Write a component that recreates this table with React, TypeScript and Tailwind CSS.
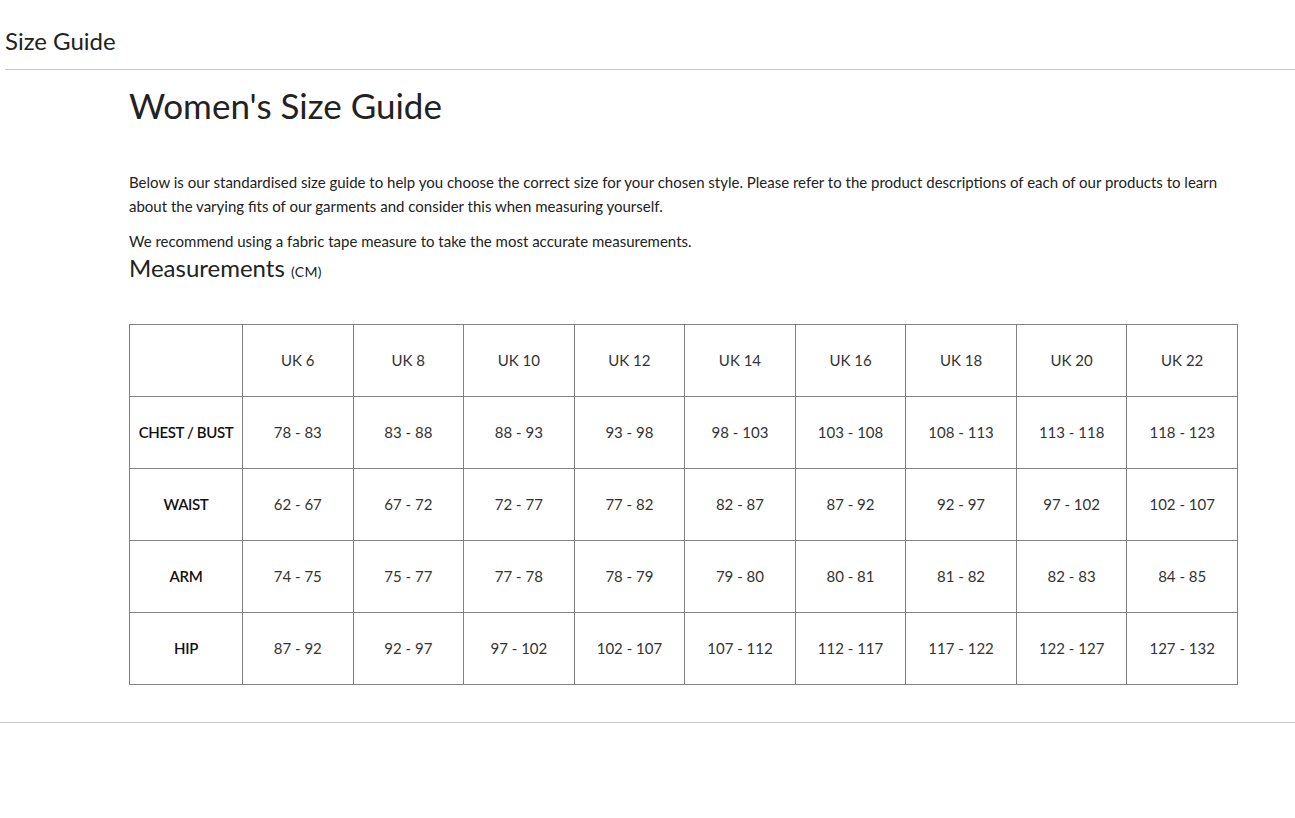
const sizes = ['UK 6', 'UK 8', 'UK 10', 'UK 12', 'UK 14', 'UK 16', 'UK 18', 'UK 20', 'UK 22']

const rows: { label: string; values: string[] }[] = [
  { label: 'CHEST / BUST', values: ['78 - 83', '83 - 88', '88 - 93', '93 - 98', '98 - 103', '103 - 108', '108 - 113', '113 - 118', '118 - 123'] },
  { label: 'WAIST', values: ['62 - 67', '67 - 72', '72 - 77', '77 - 82', '82 - 87', '87 - 92', '92 - 97', '97 - 102', '102 - 107'] },
  { label: 'ARM', values: ['74 - 75', '75 - 77', '77 - 78', '78 - 79', '79 - 80', '80 - 81', '81 - 82', '82 - 83', '84 - 85'] },
  { label: 'HIP', values: ['87 - 92', '92 - 97', '97 - 102', '102 - 107', '107 - 112', '112 - 117', '117 - 122', '122 - 127', '127 - 132'] },
]

export default function App() {
  return (
    <div className="min-h-screen bg-white text-[#222] font-['Lato','Open_Sans',sans-serif]">
      {/* en-tête */}
      <div className="pl-[5px]">
        <h2 className="pt-[26px] pb-[13px] text-[24px] leading-[30px] font-normal">Size Guide</h2>
        <div className="border-t border-[#c8c8c8]" />
      </div>

      <div className="pl-[129px] pr-[57px]">
        <h1 className="pt-[13px] text-[35px] leading-[44px] font-normal">Women's Size Guide</h1>

        <div className="pt-[43px] text-[15px] leading-[24px] text-[#222]">
          <p>
            Below is our standardised size guide to help you choose the correct size for your chosen style. Please refer to the product descriptions of each of our products to learn about the varying fits of our garments and consider this when measuring yourself.
          </p>
          <p className="mt-[11px]">We recommend using a fabric tape measure to take the most accurate measurements.</p>
        </div>

        <h3 className="text-[24px] leading-[30px] font-normal">
          Measurements <span className="text-[14px] tracking-wide">(CM)</span>
        </h3>

        <table className="mt-[37px] w-[1109px] border-collapse table-fixed text-[15px] text-[#333]">
          <colgroup>
            <col className="w-[113px]" />
            {sizes.map(s => <col key={s} />)}
          </colgroup>
          <thead>
            <tr className="h-[72px]">
              <th className="border border-[#808080]" />
              {sizes.map(s => (
                <th key={s} className="border border-[#808080] font-normal text-center">{s}</th>
              ))}
            </tr>
          </thead>
          <tbody>
            {rows.map(r => (
              <tr key={r.label} className="h-[72px]">
                <td className="border border-[#808080] text-center font-semibold text-[#111] tracking-tight">{r.label}</td>
                {r.values.map((v, i) => (
                  <td key={i} className="border border-[#808080] text-center font-normal">{v}</td>
                ))}
              </tr>
            ))}
          </tbody>
        </table>
      </div>

      <div className="mt-[37px] border-t border-[#c8c8c8]" />
    </div>
  )
}
